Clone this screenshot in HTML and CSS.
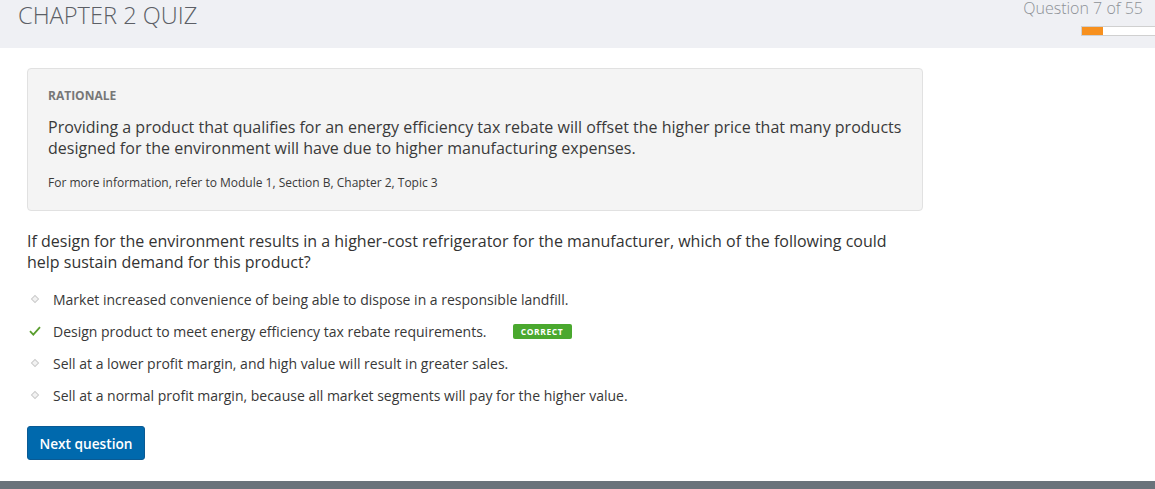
FILE: index.html
```html
<!DOCTYPE html>
<html>
<head>
<meta charset="utf-8">
<link rel="stylesheet" href="styles.css">
</head>
<body>
<header class="topbar">
  <h1 class="title">CHAPTER 2 QUIZ</h1>
  <div class="progress">
    <div class="progress-text">Question 7 of 55</div>
    <div class="progress-track"><div class="progress-fill" style="width:21px"></div></div>
  </div>
</header>
<main class="content">
  <section class="rationale">
    <div class="rationale-label">RATIONALE</div>
    <p class="rationale-text">Providing a product that qualifies for an energy efficiency tax rebate will offset the higher price that many products designed for the environment will have due to higher manufacturing expenses.</p>
    <p class="rationale-ref">For more information, refer to Module 1, Section B, Chapter 2, Topic 3</p>
  </section>
  <p class="question">If design for the environment results in a higher-cost refrigerator for the manufacturer, which of the following could help sustain demand for this product?</p>
  <ul class="options">
    <li class="option"><span class="marker diamond"></span>Market increased convenience of being able to dispose in a responsible landfill.</li>
    <li class="option"><span class="marker check"><svg width="12" height="10" viewBox="0 0 12 10"><path d="M1 5.2 L4.3 8.6 L11 1.2" fill="none" stroke="#5a9e2f" stroke-width="1.8"/></svg></span>Design product to meet energy efficiency tax rebate requirements.<span class="badge">CORRECT</span></li>
    <li class="option"><span class="marker diamond"></span>Sell at a lower profit margin, and high value will result in greater sales.</li>
    <li class="option"><span class="marker diamond"></span>Sell at a normal profit margin, because all market segments will pay for the higher value.</li>
  </ul>
  <button class="next">Next question</button>
</main>
<footer class="bottombar"></footer>
</body>
</html>
```
FILE: styles.css
```css
* { box-sizing: border-box; }
html, body { margin: 0; padding: 0; }
body {
  font-family: "Open Sans", "Liberation Sans", sans-serif;
  color: #383838;
  background: #fff;
  width: 1155px;
  height: 489px;
  overflow: hidden;
  display: flex;
  flex-direction: column;
}
.topbar {
  height: 48px;
  background: #eff0f4;
  display: flex;
  justify-content: space-between;
  align-items: flex-start;
  padding-left: 18px;
  overflow: hidden;
}
.title {
  margin: -1px 0 0;
  font-weight: 300;
  font-size: 23.6px;
  line-height: normal;
  color: #5c5f66;
}
.progress {
  display: flex;
  flex-direction: column;
  align-items: flex-end;
  width: 134px;
}
.progress-text {
  font-size: 16px;
  font-weight: 300;
  color: #8d9096;
  line-height: 16px;
  padding-right: 12px;
  white-space: nowrap;
}
.progress-track {
  margin-top: 10px;
  align-self: flex-start;
  margin-left: 60px;
  width: 90px;
  height: 10px;
  background: #fff;
  border: 1px solid #d0d0d0;
  border-right: none;
}
.progress-fill {
  height: 100%;
  background: #f7901e;
}
.content {
  flex: 1;
  padding: 20px 27px 0;
}
.rationale {
  width: 896px;
  height: 143px;
  background: #f4f4f4;
  border: 1px solid #e1e1e1;
  border-radius: 4px;
  padding: 19px 20px 0;
}
.rationale-label {
  font-size: 12px;
  font-weight: 700;
  color: #777;
  line-height: 16px;
}
.rationale-text {
  margin: 13px 0 0;
  font-size: 16px;
  line-height: 21px;
  color: #3a3a3a;
}
.rationale-ref {
  margin: 16px 0 0;
  font-size: 12px;
  line-height: 16px;
  color: #3a3a3a;
}
.question {
  margin: 20px 0 0;
  width: 880px;
  font-size: 16px;
  line-height: 21px;
  color: #333;
}
.options {
  list-style: none;
  margin: 10px 0 0;
  padding: 0;
}
.option {
  display: flex;
  align-items: center;
  height: 32px;
  font-size: 14px;
  color: #383838;
}
.marker {
  width: 26px;
  display: flex;
  align-items: center;
  padding-left: 4px;
}
.diamond::before {
  content: "";
  width: 4px;
  height: 4px;
  margin-left: 1px;
  border: 1px solid #cdcdcd;
  background: #f2f2f2;
  transform: rotate(45deg);
}
.check { padding-left: 2px; }
.check svg { display: block; }
.badge {
  margin-left: 26px;
  width: 59px;
  height: 15px;
  background: #4aa82e;
  border-radius: 2px;
  color: #fff;
  font-size: 8.5px;
  font-weight: 700;
  letter-spacing: 0.6px;
  display: flex;
  align-items: center;
  justify-content: center;
}
.next {
  margin-top: 15px;
  width: 118px;
  height: 34px;
  background: #0069ad;
  border: 1px solid #0a5a94;
  border-radius: 3px;
  color: #fff;
  font-family: "Open Sans", "Liberation Sans", sans-serif;
  font-size: 13.7px;
  font-weight: 600;
  padding: 0;
}
.bottombar {
  height: 8px;
  background: #6a737b;
}
```
